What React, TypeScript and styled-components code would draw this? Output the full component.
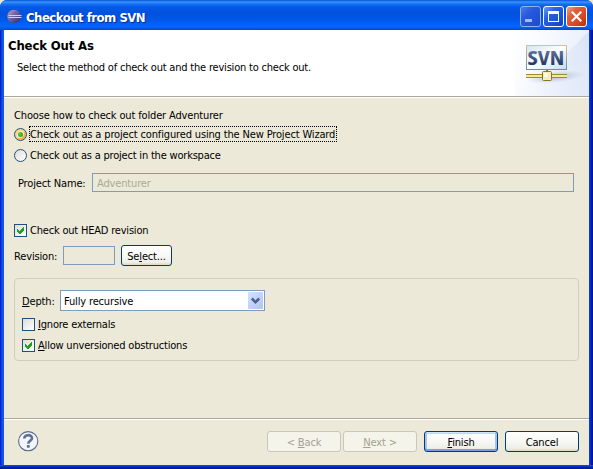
import React from 'react';
import styled, { createGlobalStyle, css } from 'styled-components';

const Global = createGlobalStyle`
  *, *::before, *::after { box-sizing: border-box; }
  body { margin: 0; overflow: hidden; background: #ece9d8; }
`;

const Window = styled.div`
  width: 593px;
  height: 469px;
  display: flex;
  flex-direction: column;
  border-radius: 7px 7px 0 0;
  overflow: hidden;
  background: linear-gradient(90deg, #0a18b4 0, #0831d9 1px, #0a4be8 2px, #1660ee 3px, #0855dd 4px, #0855dd 588px, #0046e0 589px, #0638d8 590px, #001dc0 591px, #00138c 593px);
  font: 11px/14px 'DejaVu Sans Condensed', 'DejaVu Sans', sans-serif;
  font-stretch: condensed;
  letter-spacing: -0.15px;
  color: #000;
  white-space: nowrap;
`;

const TitleBar = styled.header`
  height: 30px;
  flex: none;
  display: flex;
  align-items: center;
  padding: 3px 6px 0 7px;
  background: linear-gradient(180deg, #0a4fd0 0, #3a95ff 2px, #1472f5 4px, #0559e5 7px, #0052de 14px, #0058ea 20px, #0264fc 25px, #0364fc 27px, #0048d0 30px);
`;

const TitleText = styled.h1`
  flex: 1;
  margin: 0 0 0 4px;
  padding-top: 2px;
  font: bold 13px/18px 'DejaVu Sans Condensed', 'DejaVu Sans', sans-serif;
  font-stretch: condensed;
  letter-spacing: -0.5px;
  color: #fff;
  text-shadow: 1px 1px 1px #0a2a8c;
`;

const CaptionButtons = styled.div`
  display: flex;
  gap: 2px;
`;

const CaptionButton = styled.button<{ $tone?: 'close' | 'idle' }>`
  width: 21px;
  height: 21px;
  padding: 0;
  display: flex;
  border: 1px solid ${p => (p.$tone === 'idle' ? '#8fb0f2' : '#fff')};
  border-radius: 3px;
  background: ${p =>
    p.$tone === 'close'
      ? 'linear-gradient(135deg, #f0a088 0, #e2603c 30%, #d9431c 70%, #b53010 100%)'
      : p.$tone === 'idle'
        ? 'linear-gradient(135deg, #4c79e8 0, #2757dc 40%, #1c4bd0 100%)'
        : 'linear-gradient(135deg, #6f97f5 0, #2a5fe2 35%, #1c50da 70%, #1440b8 100%)'};
`;

const Banner = styled.section`
  height: 68px;
  flex: none;
  margin: 0 4px;
  display: flex;
  justify-content: space-between;
  background: #fff;
  border-bottom: 1px solid #fff;
  box-shadow: inset 0 -1px #aca899;
`;

const BannerCopy = styled.div`
  padding: 8px 0 0 4px;
`;

const Heading = styled.h2`
  margin: 0;
  font: bold 13px/16px 'DejaVu Sans Condensed', 'DejaVu Sans', sans-serif;
  font-stretch: condensed;
  letter-spacing: -0.15px;
`;

const Description = styled.p`
  margin: 7px 0 0 9px;
  letter-spacing: -0.2px;
`;

const Body = styled.main`
  flex: 1;
  margin: 0 4px;
  padding: 10px 11px 0 10px;
  background: #ece9d8;
`;

const Line = styled.div<{ $top?: number; $indent?: number; $height?: number }>`
  display: flex;
  align-items: center;
  height: ${p => p.$height ?? 14}px;
  margin: ${p => p.$top ?? 0}px 0 0 ${p => p.$indent ?? 0}px;
`;

const Caption = styled.p`
  margin: 0;
  padding-top: 2px;
`;

const ChoiceLabel = styled.span<{ $focused?: boolean }>`
  height: 16px;
  margin-left: 2px;
  padding: 0 0 0 1px;
  line-height: 18px;
  letter-spacing: -0.2px;
  ${p =>
    p.$focused &&
    css`
      width: 308px;
      letter-spacing: -0.15px;
      outline: 1px dotted #000;
      outline-offset: -1px;
    `}
`;

const Radio = styled.span<{ $on?: boolean }>`
  width: 13px;
  height: 13px;
  display: grid;
  place-items: center;
  border: 1px solid #21507f;
  border-radius: 50%;
  background: linear-gradient(135deg, #dcdcd7, #fff);
  ${p =>
    p.$on &&
    css`
      background: #fff2cc;
      box-shadow: inset 1px 1px 1px 1px #fbd27c, inset -1px -1px 1px 1px #f3ad38;
      &::after {
        content: '';
        width: 5px;
        height: 5px;
        border-radius: 50%;
        background: radial-gradient(circle at 40% 40%, #55d551, #168c16);
      }
    `}
`;

const CheckSquare = styled.span`
  width: 13px;
  height: 13px;
  display: flex;
  border: 1px solid #1c5180;
  background: linear-gradient(135deg, #dcdcd7, #fff);
`;

const Field = styled.div<{ $width: number; $left: number }>`
  width: ${p => p.$width}px;
  height: 19px;
  margin-left: ${p => p.$left}px;
  padding-left: 4px;
  border: 1px solid #7f9db9;
  line-height: 19px;
  color: #aca899;
`;

const FieldLabel = styled.label<{ $width: number }>`
  width: ${p => p.$width}px;
  padding-top: 2px;
`;

const PushButton = styled.button<{ $kind?: 'default' | 'disabled'; $width?: number }>`
  width: ${p => p.$width ?? 74}px;
  height: 21px;
  padding: 2px 0 0;
  border: 1px solid #003c74;
  border-radius: 3px;
  background: linear-gradient(180deg, #fff 0, #f6f6f2 55%, #efeee8 85%, #dbd6ca 100%);
  font: inherit;
  line-height: 17px;
  letter-spacing: inherit;
  color: #000;
  ${p =>
    p.$kind === 'default' &&
    css`
      box-shadow: inset 0 1px #cee7ff, inset 0 -2px #7a9de4, inset 2px 0 #a6c2f2, inset -2px 0 #a6c2f2, inset 0 2px #bcd4f6;
    `}
  ${p =>
    p.$kind === 'disabled' &&
    css`
      border-color: #c9c7ba;
      background: #f5f4ea;
      color: #a1a192;
    `}
`;

const Key = styled.span`
  text-decoration: underline;
  text-underline-offset: 1px;
  text-decoration-thickness: 1px;
  text-decoration-skip-ink: none;
`;

const Group = styled.fieldset`
  width: 565px;
  height: 83px;
  margin: 12px 0 0;
  padding: 11px 0 0 7px;
  border: 1px solid #d0cfbf;
  border-radius: 4px;
`;

const Combo = styled.div`
  width: 205px;
  height: 21px;
  display: flex;
  align-items: center;
  justify-content: space-between;
  padding: 0 1px 0 3px;
  border: 1px solid #7f9db9;
  background: #fff;
`;

const ComboArrow = styled.span`
  width: 15px;
  height: 17px;
  display: flex;
  border-radius: 1px;
  background: linear-gradient(135deg, #d5e0ff, #c1d3fb 50%, #aec5f5);
`;

const Footer = styled.footer`
  height: 47px;
  flex: none;
  margin: 0 4px;
  padding: 12px 10px 0 14px;
  display: flex;
  align-items: flex-start;
  background: #ece9d8;
  border-top: 1px solid #aca899;
  box-shadow: inset 0 1px #fff;
`;

const HelpSlot = styled.div`
  flex: 1;
  height: 21px;
`;

const ButtonGroup = styled.div<{ $left?: number }>`
  display: flex;
  gap: 2px;
  margin-left: ${p => p.$left ?? 0}px;
`;

const BottomEdge = styled.div`
  height: 4px;
  flex: none;
  background: linear-gradient(180deg, #0a4fe6 0, #0441d8 1px, #0023bd 2px, #00138c 4px);
`;

const EclipseIcon = () => (
  <svg width="15" height="16" viewBox="0 0 15 16">
    <defs>
      <linearGradient id="orb" x1="0" y1="0" x2="1" y2="1">
        <stop offset="0" stopColor="#d8a8b4" />
        <stop offset=".4" stopColor="#7568a8" />
        <stop offset="1" stopColor="#2b2467" />
      </linearGradient>
    </defs>
    <circle cx="7" cy="7.5" r="6.8" fill="url(#orb)" />
    <path d="M1.5 6.5H14.5M1.5 8.5H14.5" stroke="#c9d0f0" strokeWidth="1" />
  </svg>
);

const SvnLogo = () => (
  <svg width="74" height="66" viewBox="0 0 74 66">
    <defs>
      <linearGradient id="wash" x1="0" y1="0" x2="1" y2="0.4">
        <stop offset="0" stopColor="#fff" />
        <stop offset=".4" stopColor="#f8fafe" />
        <stop offset="1" stopColor="#e6edfa" />
      </linearGradient>
      <linearGradient id="curve" x1="1" y1="0" x2="0.1" y2="0.7">
        <stop offset="0" stopColor="#d9e3f7" />
        <stop offset="1" stopColor="#e4ebf9" stopOpacity="0" />
      </linearGradient>
      <linearGradient id="pane" x1="0" y1="0" x2="1" y2="1">
        <stop offset="0" stopColor="#d3e3f6" />
        <stop offset=".5" stopColor="#fff" />
        <stop offset="1" stopColor="#c7d9ee" />
      </linearGradient>
      <linearGradient id="frame" x1="0" y1="0" x2="0" y2="1">
        <stop offset="0" stopColor="#dcbd92" />
        <stop offset="1" stopColor="#6c9097" />
      </linearGradient>
      <linearGradient id="letters" x1="0" y1="0" x2="0" y2="1">
        <stop offset="0" stopColor="#7b89aa" />
        <stop offset=".75" stopColor="#253968" />
      </linearGradient>
      <radialGradient id="shade">
        <stop offset="0" stopColor="#8c90b0" stopOpacity=".6" />
        <stop offset="1" stopColor="#b0b4cc" stopOpacity="0" />
      </radialGradient>
    </defs>
    <rect width="74" height="66" fill="url(#wash)" />
    <path d="M74 2C66 6 62 19 46 25C28 31 10 42 4 66H74Z" fill="url(#curve)" />
    <ellipse cx="40" cy="47" rx="30" ry="6" fill="url(#shade)" transform="rotate(-6 40 47)" />
    <rect x="11.5" y="15.5" width="40" height="24" fill="url(#pane)" stroke="url(#frame)" />
    <text x="12.5" y="35" textLength="37" lengthAdjust="spacingAndGlyphs" fontFamily="Open Sans, sans-serif" fontWeight="700" fontSize="19" letterSpacing="0" fill="url(#letters)">SVN</text>
    <path d="M11 44.5H52M11 47.5H52" stroke="#9c8d29" />
    <path d="M11 46H52" stroke="#f5e99a" strokeWidth="2" />
    <path d="M32 40V42" stroke="#84772a" strokeWidth="2" />
    <rect x="27.5" y="41.5" width="9" height="9" rx="1" fill="#f8edba" stroke="#84752a" />
    <rect x="29" y="43" width="4" height="4" fill="#fffbe5" />
  </svg>
);

const Tick = () => (
  <svg width="11" height="11" viewBox="0 0 11 11" shapeRendering="crispEdges">
    <path d="M2 4v3l2 2h1l4-4V2L4.5 6.3Z" fill="#21a121" />
  </svg>
);

const Chevron = () => (
  <svg width="15" height="17" viewBox="0 0 15 17">
    <path d="M3.8 6.5L7.5 10.2L11.2 6.5" fill="none" stroke="#4d6185" strokeWidth="2.5" />
  </svg>
);

const HelpIcon = () => (
  <svg width="21" height="21" viewBox="0 0 21 21">
    <circle cx="10.2" cy="10.2" r="9.6" fill="#f3f5fa" stroke="#5b6b8f" strokeWidth="1.1" />
    <path d="M6.3 7.6C6.3 3 14 3.2 14 7.2C14 9.8 10.3 9.6 10.3 12.8" fill="none" stroke="#5f7094" strokeWidth="2.6" />
    <rect x="8.8" y="14" width="3" height="2.8" rx=".8" fill="#5f7094" />
  </svg>
);

const CaptionGlyph = ({ kind }: { kind: 'min' | 'max' | 'close' }) => (
  <svg width="19" height="19" viewBox="0 0 19 19">
    {kind === 'min' && <rect x="4" y="12" width="7" height="3" fill="#a3baf3" />}
    {kind === 'max' && <path d="M4 4H15V15H4ZM5 7V14H14V7Z" fill="#fff" fillRule="evenodd" />}
    {kind === 'close' && <path d="M4.8 4.8L14.2 14.2M14.2 4.8L4.8 14.2" stroke="#fff" strokeWidth="2.2" />}
  </svg>
);

export default function App() {
  return (
    <>
      <Global />
      <Window>
        <TitleBar>
          <EclipseIcon />
          <TitleText>Checkout from SVN</TitleText>
          <CaptionButtons>
            <CaptionButton $tone="idle"><CaptionGlyph kind="min" /></CaptionButton>
            <CaptionButton><CaptionGlyph kind="max" /></CaptionButton>
            <CaptionButton $tone="close"><CaptionGlyph kind="close" /></CaptionButton>
          </CaptionButtons>
        </TitleBar>
        <Banner>
          <BannerCopy>
            <Heading>Check Out As</Heading>
            <Description>Select the method of check out and the revision to check out.</Description>
          </BannerCopy>
          <SvnLogo />
        </Banner>
        <Body>
          <Line><Caption>Choose how to check out folder Adventurer</Caption></Line>
          <Line $top={4} $height={16}>
            <Radio $on />
            <ChoiceLabel $focused>Check out as a project configured using the New Project Wizard</ChoiceLabel>
          </Line>
          <Line $top={5} $height={16}>
            <Radio />
            <ChoiceLabel>Check out as a project in the workspace</ChoiceLabel>
          </Line>
          <Line $top={10} $indent={4} $height={19}>
            <FieldLabel $width={69}>Project Name:</FieldLabel>
            <Field $width={482} $left={5}>Adventurer</Field>
          </Line>
          <Line $top={30} $height={16}>
            <CheckSquare><Tick /></CheckSquare>
            <ChoiceLabel>Check out HEAD revision</ChoiceLabel>
          </Line>
          <Line $top={7} $height={21}>
            <FieldLabel $width={44}>Revision:</FieldLabel>
            <Field $width={52} $left={5} />
            <ButtonGroup $left={6}>
              <PushButton $width={51}>Se<Key>l</Key>ect...</PushButton>
            </ButtonGroup>
          </Line>
          <Group>
            <Line $height={21}>
              <FieldLabel $width={38}><Key>D</Key>epth:</FieldLabel>
              <Combo>
                <Caption>Fully recursive</Caption>
                <ComboArrow><Chevron /></ComboArrow>
              </Combo>
            </Line>
            <Line $top={5} $height={16}>
              <CheckSquare />
              <ChoiceLabel><Key>I</Key>gnore externals</ChoiceLabel>
            </Line>
            <Line $top={5} $height={16}>
              <CheckSquare><Tick /></CheckSquare>
              <ChoiceLabel><Key>A</Key>llow unversioned obstructions</ChoiceLabel>
            </Line>
          </Group>
        </Body>
        <Footer>
          <HelpSlot><HelpIcon /></HelpSlot>
          <ButtonGroup>
            <PushButton $kind="disabled">&lt; <Key>B</Key>ack</PushButton>
            <PushButton $kind="disabled"><Key>N</Key>ext &gt;</PushButton>
          </ButtonGroup>
          <ButtonGroup $left={7}>
            <PushButton $kind="default"><Key>F</Key>inish</PushButton>
          </ButtonGroup>
          <ButtonGroup $left={7}>
            <PushButton>Cancel</PushButton>
          </ButtonGroup>
        </Footer>
        <BottomEdge />
      </Window>
    </>
  );
}
